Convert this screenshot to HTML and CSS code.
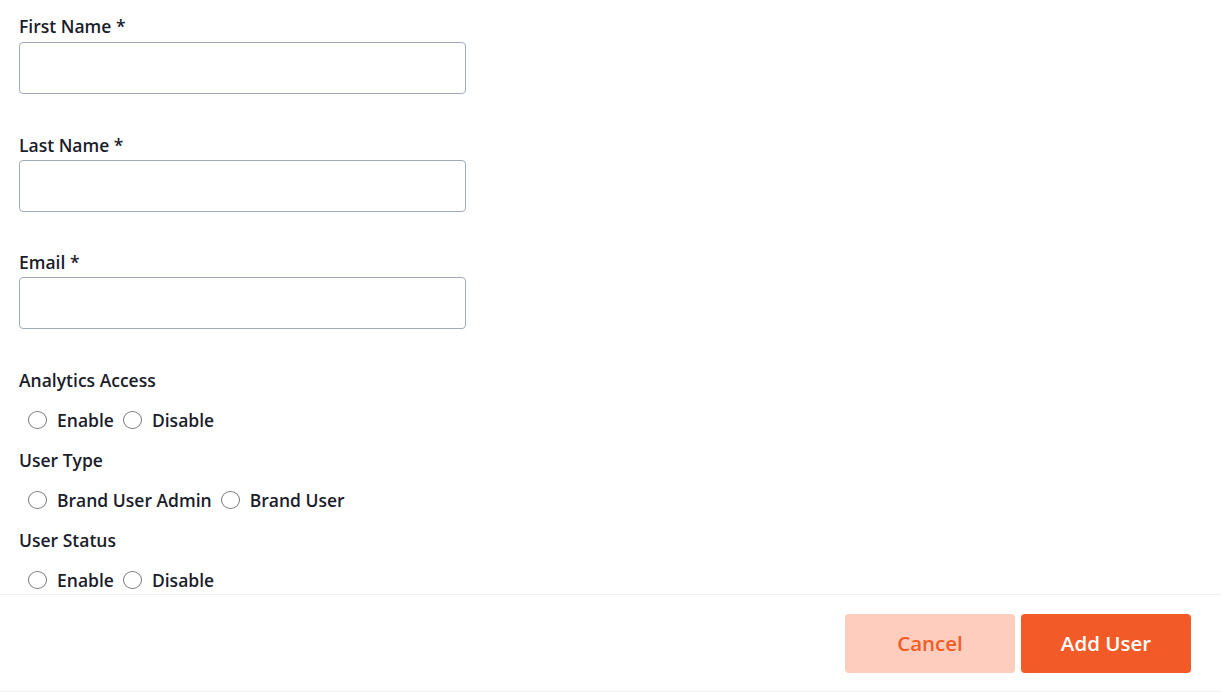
FILE: index.html
```html
<!DOCTYPE html>
<html>
<head>
<meta charset="utf-8">
<link rel="stylesheet" href="styles.css">
</head>
<body>
<div class="page">
  <div class="form">
    <div class="field">
      <label class="label">First Name *</label>
      <input class="input" type="text">
    </div>
    <div class="field">
      <label class="label">Last Name *</label>
      <input class="input" type="text">
    </div>
    <div class="field">
      <label class="label">Email *</label>
      <input class="input" type="text">
    </div>
    <div class="group">
      <div class="group-label">Analytics Access</div>
      <div class="radios">
        <label class="radio"><input type="radio" name="a"><span>Enable</span></label>
        <label class="radio"><input type="radio" name="a"><span>Disable</span></label>
      </div>
      <div class="group-label">User Type</div>
      <div class="radios">
        <label class="radio"><input type="radio" name="t"><span>Brand User Admin</span></label>
        <label class="radio"><input type="radio" name="t"><span>Brand User</span></label>
      </div>
      <div class="group-label">User Status</div>
      <div class="radios">
        <label class="radio"><input type="radio" name="s"><span>Enable</span></label>
        <label class="radio"><input type="radio" name="s"><span>Disable</span></label>
      </div>
    </div>
  </div>
  <div class="footer">
    <button class="btn btn-cancel">Cancel</button>
    <button class="btn btn-primary">Add User</button>
  </div>
</div>
</body>
</html>
```
FILE: styles.css
```css
* { box-sizing: border-box; }
html, body { margin: 0; padding: 0; background: #fff; }
body {
  font-family: "Open Sans", "Noto Sans", sans-serif;
  color: #1b1d2a;
  width: 1221px;
  height: 692px;
  overflow: hidden;
}
.page { display: flex; flex-direction: column; }
.form {
  height: 594px;
  overflow: hidden;
  padding: 14px 0 0 19px;
}
.field { display: flex; flex-direction: column; margin-bottom: 38.5px; }
.field:first-child .label { margin-bottom: 4px; }
.label {
  font-size: 17.5px;
  font-weight: 600;
  line-height: 24px;
  margin-bottom: 3px;
}
.input {
  width: 447px;
  height: 52px;
  border: 1px solid #a3abba;
  border-radius: 4px;
  padding: 0 12px;
  font: inherit;
  outline: none;
}
.group { margin-top: -8px; }
.group-label {
  font-size: 17.5px;
  font-weight: 600;
  line-height: 40px;
  height: 40px;
}
.radios {
  display: flex;
  height: 40px;
  line-height: 40px;
  font-size: 17.5px;
  font-weight: 600;
}
.radio { display: flex; align-items: baseline; }
.radio input {
  appearance: none;
  -webkit-appearance: none;
  width: 19px;
  height: 18px;
  border: 1px solid #777a80;
  border-radius: 50%;
  margin: 0 10px 0 9px;
  position: relative;
  top: 2px;
  background: #fff;
}
.radio + .radio input { margin-left: 9px; }
.footer {
  height: 98px;
  border-top: 1px solid #eeeef4;
  border-bottom: 1px solid #eeeef4;
  display: flex;
  justify-content: flex-end;
  align-items: flex-start;
  gap: 6px;
  padding: 19px 30px 0 0;
}
.btn {
  width: 170px;
  height: 59px;
  border: none;
  border-radius: 4px;
  font-family: "Open Sans", sans-serif;
  font-size: 20.5px;
  font-weight: 600;
  padding-bottom: 2px;
  cursor: pointer;
}
.btn-cancel { background: #ffcdbd; color: #f25c27; }
.btn-primary { background: #f25a27; color: #fff; }
```
